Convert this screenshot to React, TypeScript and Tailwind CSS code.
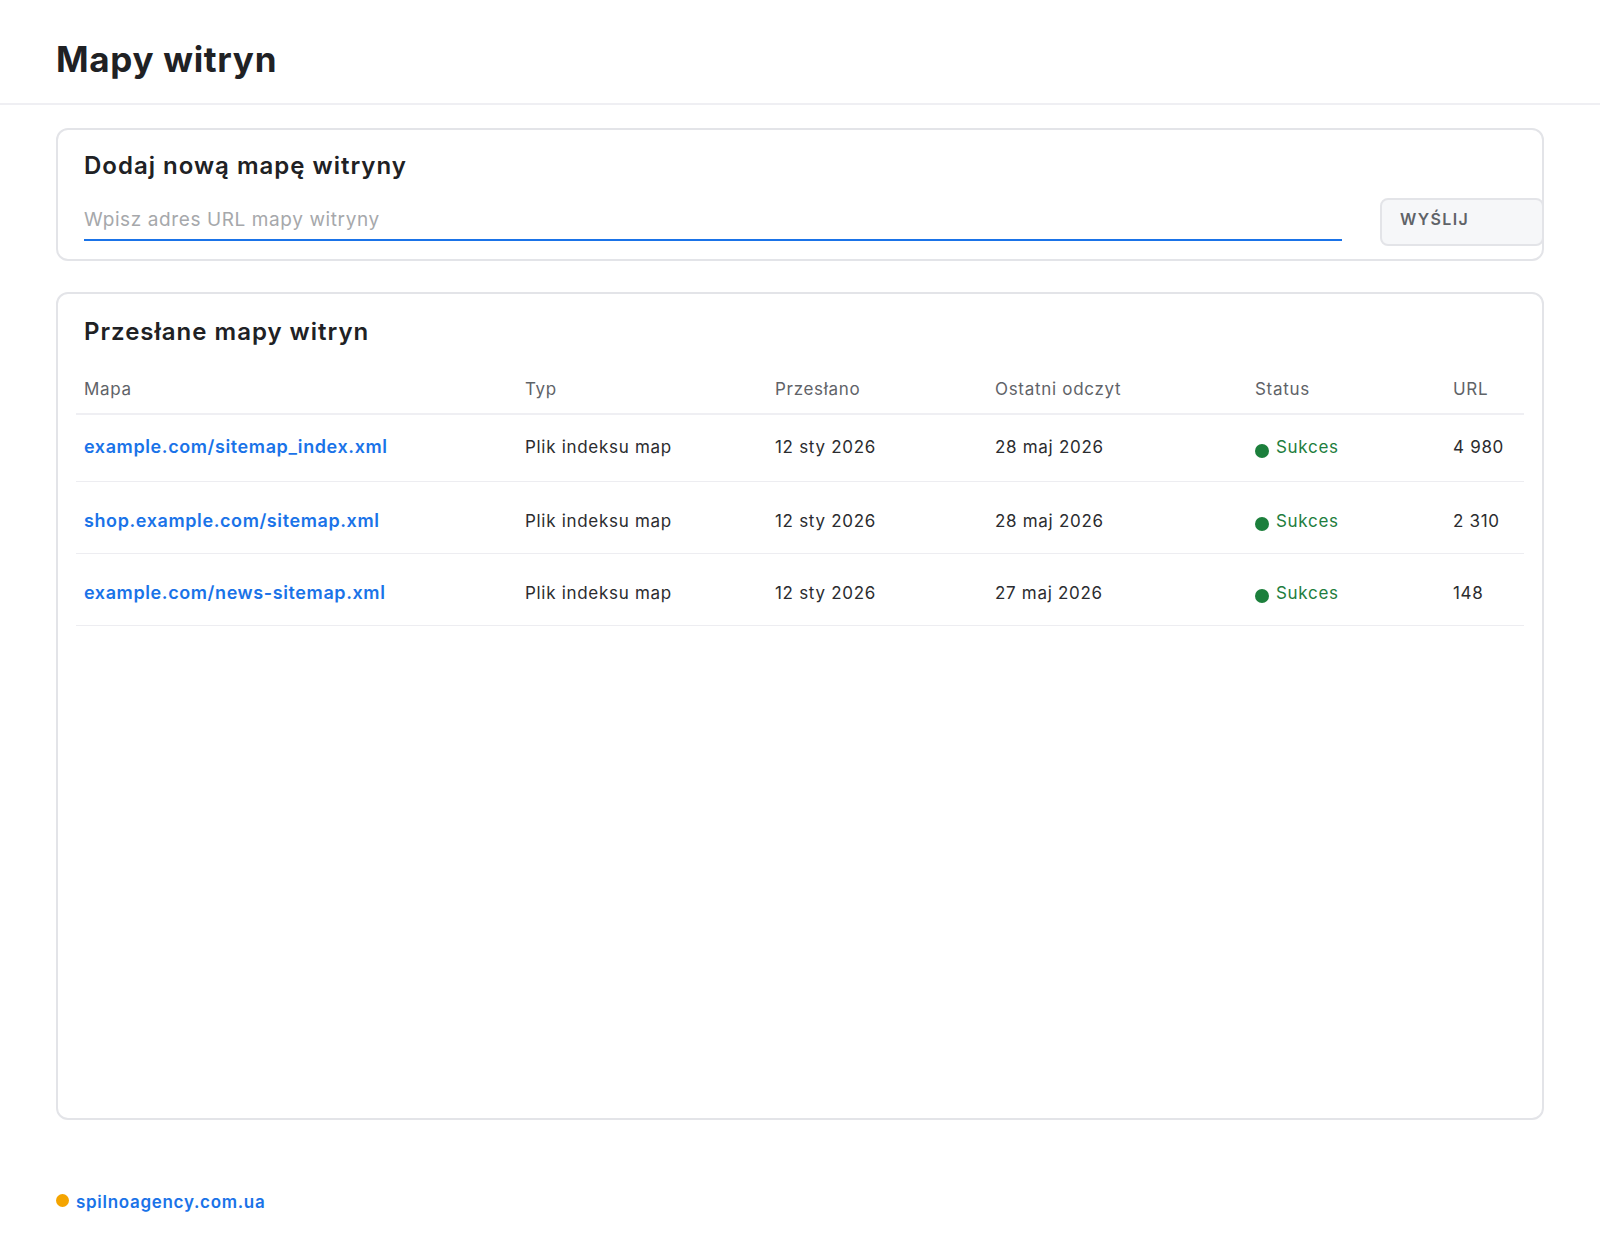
type SitemapRow = {
  path: string
  kind: string
  sent: string
  lastRead: string
  status: string
  urls: string
}

const rows: SitemapRow[] = [
  { path: "example.com/sitemap_index.xml", kind: "Plik indeksu map", sent: "12 sty 2026", lastRead: "28 maj 2026", status: "Sukces", urls: "4 980" },
  { path: "shop.example.com/sitemap.xml", kind: "Plik indeksu map", sent: "12 sty 2026", lastRead: "28 maj 2026", status: "Sukces", urls: "2 310" },
  { path: "example.com/news-sitemap.xml", kind: "Plik indeksu map", sent: "12 sty 2026", lastRead: "27 maj 2026", status: "Sukces", urls: "148" },
]

// column widths shared by the head and the body rows
const cols = "grid grid-cols-[441px_250px_220px_260px_198px_1fr]"

const App = () => {
  return (
    <div className="min-h-[1240px] bg-white text-[#202124] font-['Inter','Liberation_Sans',sans-serif]">
      {/* PAGE HEADER */}
      <header className="h-[105px] border-b-2 border-[#efeff3] px-14 pt-[38px]">
        <h1 className="text-[35px] leading-[42px] font-bold tracking-[0.7px]">Mapy witryn</h1>
      </header>

      <main className="px-14 pt-[23px]">
        {/* ADD SITEMAP CARD */}
        <section className="h-[133px] rounded-xl border-2 border-[#e3e4e8] pl-[26px] pt-[21px]">
          <h2 className="text-[24px] leading-[30px] font-semibold tracking-[1px]">Dodaj nową mapę witryny</h2>
          <div className="mt-[17px] flex items-end">
            <div className="flex-1 mr-[38px] border-b-2 border-[#1a73e8] pb-[6px]">
              <input
                className="w-full bg-transparent text-[19px] leading-[26px] tracking-[0.6px] text-[#202124] placeholder:text-[#a6a8ab] outline-none"
                placeholder="Wpisz adres URL mapy witryny"
              />
            </div>
            <button className="-mr-[2px] -mb-[5px] h-[48px] w-[164px] rounded-lg border-2 border-[#e3e4e8] bg-[#f6f7f9] pl-[18px] pb-[6px] text-left text-[16px] font-semibold tracking-[1.4px] text-[#5f6368]">
              WYŚLIJ
            </button>
          </div>
        </section>

        {/* SUBMITTED SITEMAPS CARD */}
        <section className="mt-[31px] h-[828px] rounded-xl border-2 border-[#e3e4e8] px-[18px] pt-[23px]">
          <h2 className="ml-2 text-[24px] leading-[30px] font-semibold tracking-[1px]">Przesłane mapy witryn</h2>

          <div className="mt-[20px]">
            <div className={`${cols} h-[48px] items-center border-b-2 border-[#efeff3] text-[17px] tracking-[0.7px] text-[#5f6368]`}>
              <div className="pl-2">Mapa</div>
              <div className="pl-2">Typ</div>
              <div className="pl-2">Przesłano</div>
              <div className="pl-2">Ostatni odczyt</div>
              <div className="pl-2">Status</div>
              <div className="pl-2">URL</div>
            </div>

            {rows.map((row, i) => (
              <div
                key={row.path}
                className={`${cols} ${i === 0 ? "h-[67px]" : "h-[72px] pt-[8px]"} items-center border-b border-[#ededf1] text-[17px] tracking-[0.7px] text-[#2b2c2f]`}
              >
                <div className="pl-2 -mt-[3px] text-[18px] font-semibold tracking-[0.6px] text-[#1a73e8]">{row.path}</div>
                <div className="pl-2">{row.kind}</div>
                <div className="pl-2">{row.sent}</div>
                <div className="pl-2">{row.lastRead}</div>
                <div className="pl-2 flex items-center gap-[7px] text-[#1e7e3e]">
                  <span className="mt-[5px] h-[14px] w-[14px] rounded-full bg-[#1c7f3c]" />
                  <span>{row.status}</span>
                </div>
                <div className="pl-2">{row.urls}</div>
              </div>
            ))}
          </div>
        </section>

        {/* FOOTER */}
        <footer className="mt-[70px] flex items-center gap-[7px]">
          <span className="-mt-[5px] h-[13px] w-[13px] rounded-full bg-[#f4a400]" />
          <a className="text-[17px] font-semibold tracking-[0.7px] text-[#1a73e8]">spilnoagency.com.ua</a>
        </footer>
      </main>
    </div>
  )
}

export default App
